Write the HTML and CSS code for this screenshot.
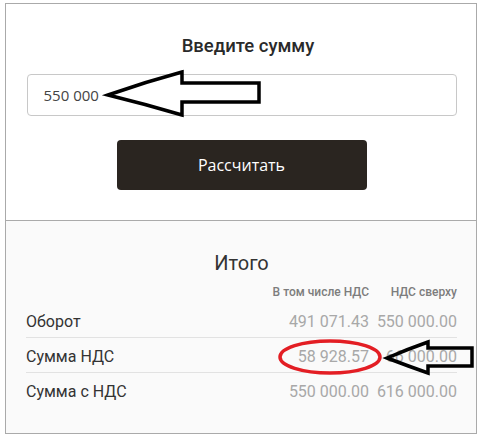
FILE: index.html
```html
<!DOCTYPE html>
<html lang="ru">
<head>
<meta charset="utf-8">
<link rel="stylesheet" href="styles.css">
</head>
<body>
<div class="card">
  <section class="calc">
    <h2 class="calc-title">Введите сумму</h2>
    <input class="calc-input" type="text" value="550 000">
    <button class="calc-btn" type="button">Рассчитать</button>
  </section>
  <section class="result">
    <h3 class="result-title">Итого</h3>
    <div class="table">
      <div class="row head">
        <span></span><span class="num">В том числе НДС</span><span class="num">НДС сверху</span>
      </div>
      <div class="row line">
        <span class="label">Оборот</span><span class="num val">491 071.43</span><span class="num val">550 000.00</span>
      </div>
      <div class="row line">
        <span class="label">Сумма НДС</span><span class="num val">58 928.57</span><span class="num val">66 000.00</span>
      </div>
      <div class="row">
        <span class="label">Сумма с НДС</span><span class="num val">550 000.00</span><span class="num val">616 000.00</span>
      </div>
    </div>
  </section>
</div>
<svg class="overlay" width="482" height="440" viewBox="0 0 482 440">
  <path d="M108 95 Q145 82 182 72 L182 83 L259 83 L259 102 L182 102 L182 115 Q145 104 108 95 Z" fill="none" stroke="#000" stroke-width="3.5" stroke-linejoin="miter"/>
  <ellipse cx="330" cy="357" rx="50" ry="16" fill="none" stroke="#e31e24" stroke-width="3.5"/>
  <path d="M387 358 Q408 349 428 342 L428 348 L472 348 L472 366 L428 366 L428 373 Q408 366 387 358 Z" fill="none" stroke="#000" stroke-width="3.5"/>
</svg>
</body>
</html>
```
FILE: styles.css
```css
* { box-sizing: border-box; }
html, body { margin: 0; padding: 0; background: #fff; }
body { position: relative; width: 482px; height: 440px; overflow: hidden; }
.card {
  margin: 3px 0 0 5px;
  width: 472px;
  height: 431px;
  border: 1px solid #aaa;
  display: flex;
  flex-direction: column;
}
.calc {
  padding: 30px 19px 0 20px;
  height: 217px;
  border-bottom: 1px solid #aaa;
  display: flex;
  flex-direction: column;
  align-items: center;
}
.calc-title {
  margin: 0 0 0 13px;
  font: 500 18.5px/24px Roboto, sans-serif;
  color: #2a2a2a;
}
.calc-input {
  margin-top: 16px;
  width: 430px;
  height: 42px;
  border: 1px solid #c8c8c8;
  border-radius: 4px;
  padding: 0 16px;
  font: 400 15px "Open Sans", sans-serif;
  color: #444;
  outline: none;
}
.calc-btn {
  margin-top: 24px;
  width: 250px;
  height: 50px;
  border: 0;
  border-radius: 4px;
  background: #2a2520;
  color: #fff;
  font: 400 16px "Open Sans", sans-serif;
}
.result {
  flex: 1;
  background: #fafafa;
  padding: 30px 19px 0 20px;
}
.result-title {
  margin: 0;
  text-align: center;
  font: 400 20px/24px Roboto, sans-serif;
  color: #333;
}
.table { margin-top: 9px; }
.row {
  display: grid;
  grid-template-columns: 1fr 110px 88px;
  font: 400 16px/20px Roboto, sans-serif;
  padding: 9px 0 5px;
}
.row.line { border-bottom: 1px solid #e2e2e2; }
.row.head {
  font: 500 12px/16px Roboto, sans-serif;
  color: #7d7d7d;
  padding: 0 0 3px;
}
.label { color: #333; }
.num { text-align: right; }
.val { color: #a8a8a8; }
.overlay { position: absolute; left: 0; top: 0; pointer-events: none; }
```
